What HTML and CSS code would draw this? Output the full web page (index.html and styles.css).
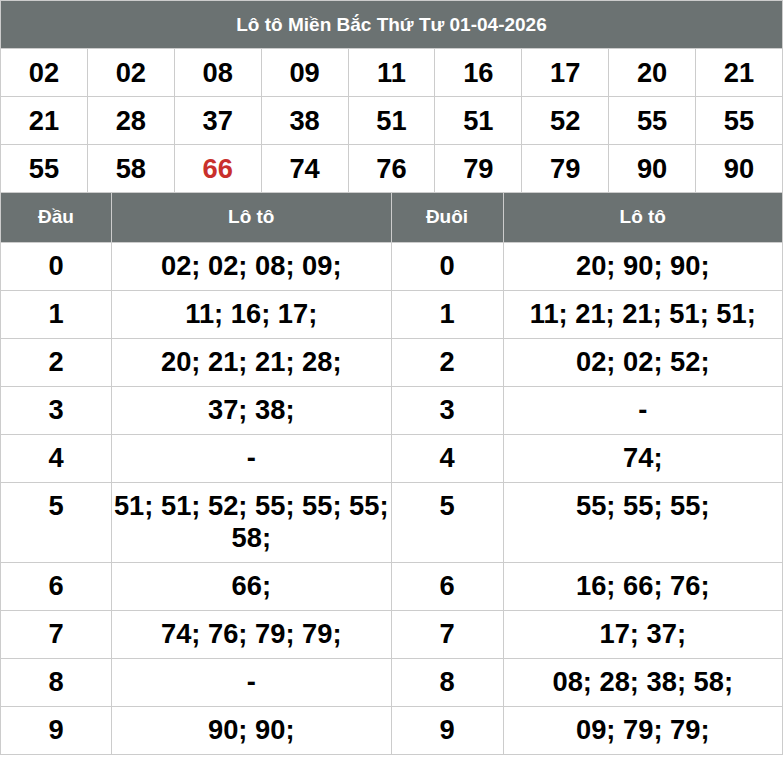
FILE: index.html
```html
<!DOCTYPE html>
<html lang="vi">
<head>
<meta charset="utf-8">
<title>Lô tô Miền Bắc</title>
<link rel="stylesheet" href="styles.css">
</head>
<body>
<div class="wrap">
  <table class="grid">
    <thead>
      <tr><th colspan="9" class="title">Lô tô Miền Bắc Thứ Tư 01-04-2026</th></tr>
    </thead>
    <tbody>
      <tr><td>02</td><td>02</td><td>08</td><td>09</td><td>11</td><td>16</td><td>17</td><td>20</td><td>21</td></tr>
      <tr><td>21</td><td>28</td><td>37</td><td>38</td><td>51</td><td>51</td><td>52</td><td>55</td><td>55</td></tr>
      <tr><td>55</td><td>58</td><td class="hot">66</td><td>74</td><td>76</td><td>79</td><td>79</td><td>90</td><td>90</td></tr>
    </tbody>
  </table>
  <table class="dd">
    <colgroup>
      <col class="c-key"><col class="c-val"><col class="c-key2"><col class="c-val">
    </colgroup>
    <thead>
      <tr><th>Đầu</th><th>Lô tô</th><th>Đuôi</th><th>Lô tô</th></tr>
    </thead>
    <tbody>
      <tr><td>0</td><td>02; 02; 08; 09;</td><td>0</td><td>20; 90; 90;</td></tr>
      <tr><td>1</td><td>11; 16; 17;</td><td>1</td><td>11; 21; 21; 51; 51;</td></tr>
      <tr><td>2</td><td>20; 21; 21; 28;</td><td>2</td><td>02; 02; 52;</td></tr>
      <tr><td>3</td><td>37; 38;</td><td>3</td><td>-</td></tr>
      <tr><td>4</td><td>-</td><td>4</td><td>74;</td></tr>
      <tr><td>5</td><td>51; 51; 52; 55; 55; 55; 58;</td><td>5</td><td>55; 55; 55;</td></tr>
      <tr><td>6</td><td>66;</td><td>6</td><td>16; 66; 76;</td></tr>
      <tr><td>7</td><td>74; 76; 79; 79;</td><td>7</td><td>17; 37;</td></tr>
      <tr><td>8</td><td>-</td><td>8</td><td>08; 28; 38; 58;</td></tr>
      <tr><td>9</td><td>90; 90;</td><td>9</td><td>09; 79; 79;</td></tr>
    </tbody>
  </table>
</div>
</body>
</html>
```
FILE: styles.css
```css
* { box-sizing: border-box; }
html, body { margin: 0; padding: 0; background: #fff; }
body { font-family: "Liberation Sans", Arial, sans-serif; color: #000; }
.wrap { width: 783px; }
table {
  width: 100%;
  border-collapse: collapse;
  table-layout: fixed;
}
th, td {
  border: 1px solid #cccccc;
  text-align: center;
  padding: 0;
}
th {
  background: #6b7272;
  color: #fff;
  font-weight: bold;
  font-size: 19px;
  height: 48px;
}
.grid th.title { height: 48px; }
.grid td {
  font-size: 27.3px;
  font-weight: bold;
  height: 48px;
  line-height: 32px;
}
.grid td.hot { color: #c9302c; }
.dd { border-top: 0; }
.dd thead th { border-top: 0; height: 49px; }
.c-key { width: 111px; }
.c-key2 { width: 112px; }
.dd td {
  font-size: 27.3px;
  font-weight: bold;
  line-height: 32px;
  padding: 7px 0 8px;
  vertical-align: top;
}
```
